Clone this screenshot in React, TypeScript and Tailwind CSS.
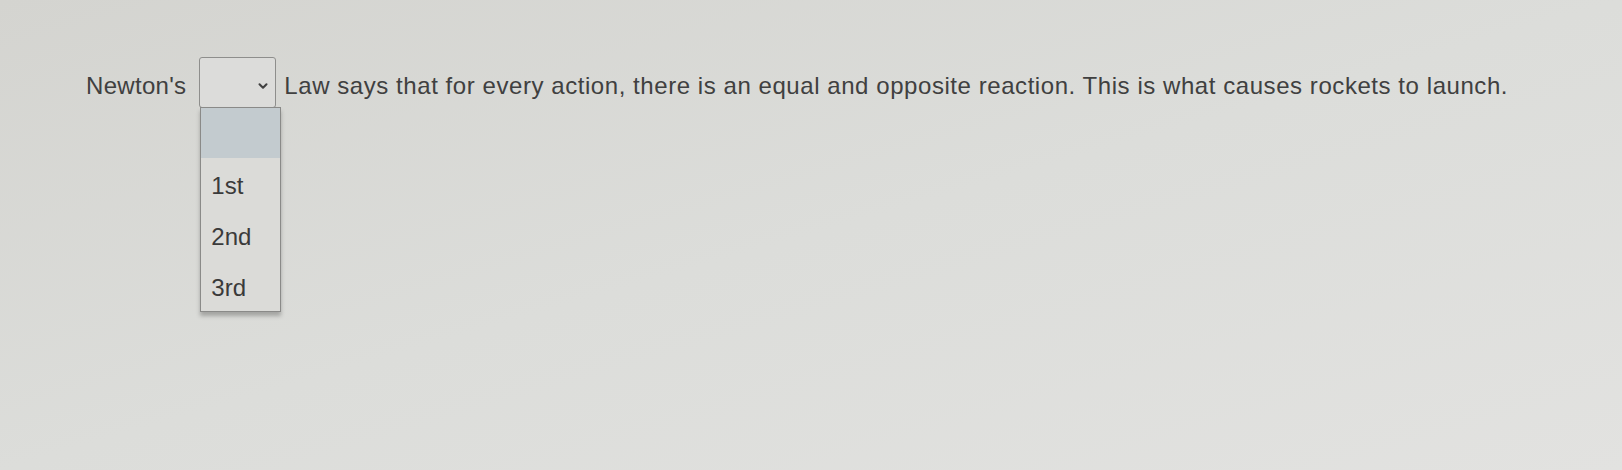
import { ChevronDown } from "lucide-react";

export default function App() {
  const options = ["1st", "2nd", "3rd"];
  return (
    <div className="w-[1622px] h-[470px] overflow-hidden bg-gradient-to-br from-[#d4d4d0] via-[#dcddda] to-[#e2e2e0] font-['Liberation_Sans',Arial,sans-serif] text-[#404040]">
      <div className="flex items-center pt-[57px] pl-[86px] text-[24px]">
        <span className="mt-[6px] pr-[13px] tracking-[0.3px]">Newton's</span>
        <div className="relative">
          <div className="w-[77px] h-[51px] rounded-[3px] border border-[#8e8e8c] bg-[#dcdcda] flex items-center justify-end pr-[5px] pt-[6px]">
            <ChevronDown size={14} strokeWidth={3.5} className="text-[#404040]" />
          </div>
          <div className="absolute left-[1px] top-[50px] w-[81px] border border-[#8a8a88] bg-[#dbdbd8] shadow-[0_4px_4px_rgba(0,0,0,0.25)]">
            <div className="h-[50px] bg-[#c3cbcf]" />
            {options.map((o) => (
              <div key={o} className="h-[51px] flex items-center pl-[10px] pt-[4px] text-[#3a3a3a]">
                {o}
              </div>
            ))}
          </div>
        </div>
        <span className="mt-[6px] pl-[8px] whitespace-nowrap tracking-[0.56px]">
          Law says that for every action, there is an equal and opposite reaction. This is what causes rockets to launch.
        </span>
      </div>
    </div>
  );
}
